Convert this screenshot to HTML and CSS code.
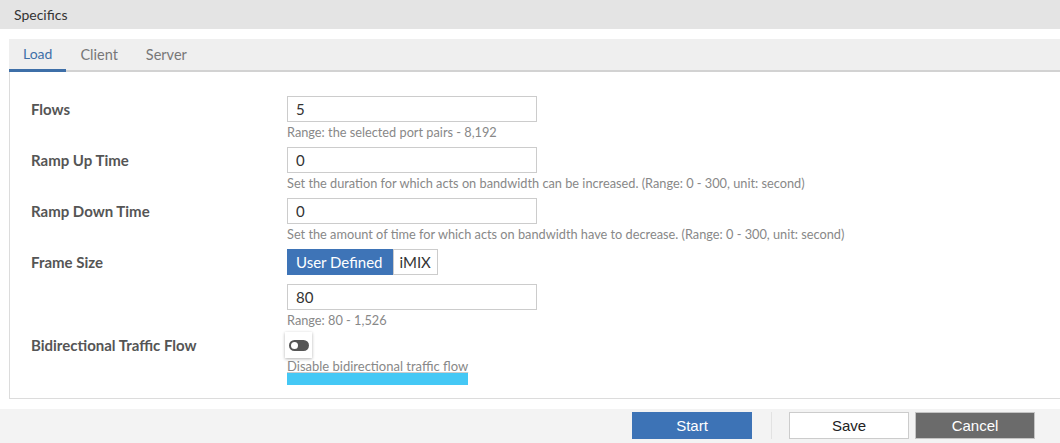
FILE: index.html
```html
<!DOCTYPE html>
<html lang="en">
<head>
    <meta charset="UTF-8">
    <meta name="viewport" content="width=device-width, initial-scale=1.0">
    <title>Specifics</title>
    <link rel="stylesheet" href="styles.css">
</head>
<body>
    <div class="section-title">Specifics</div>

    <div class="wrap">
        <div class="tabs">
            <div class="tab active">Load</div>
            <div class="tab">Client</div>
            <div class="tab">Server</div>
        </div>

        <div class="panel">
            <div class="row">
                <div class="label">Flows</div>
                <div class="field">
                    <input class="text-input" type="text" value="5">
                    <div class="help">Range: the selected port pairs - 8,192</div>
                </div>
            </div>
            <div class="row">
                <div class="label">Ramp Up Time</div>
                <div class="field">
                    <input class="text-input" type="text" value="0">
                    <div class="help">Set the duration for which acts on bandwidth can be increased. (Range: 0 - 300, unit: second)</div>
                </div>
            </div>
            <div class="row">
                <div class="label">Ramp Down Time</div>
                <div class="field">
                    <input class="text-input" type="text" value="0">
                    <div class="help">Set the amount of time for which acts on bandwidth have to decrease. (Range: 0 - 300, unit: second)</div>
                </div>
            </div>
            <div class="row">
                <div class="label">Frame Size</div>
                <div class="field">
                    <div class="segmented">
                        <button class="seg on">User Defined</button>
                        <button class="seg">iMIX</button>
                    </div>
                    <input class="text-input gap-top" type="text" value="80">
                    <div class="help">Range: 80 - 1,526</div>
                </div>
            </div>
            <div class="row toggle-row">
                <div class="label">Bidirectional Traffic Flow</div>
                <div class="field">
                    <div class="toggle-box"><span class="toggle"></span></div>
                    <span class="toggle-note">Disable bidirectional traffic flow</span>
                </div>
            </div>
        </div>
    </div>

    <div class="footer">
        <button class="btn btn-start">Start</button>
        <span class="sep"></span>
        <button class="btn btn-save">Save</button>
        <button class="btn btn-cancel">Cancel</button>
    </div>
</body>
</html>
```

FILE: styles.css
```css
body, html {
    margin: 0;
    padding: 0;
    font-family: Lato, "Open Sans", sans-serif;
    background-color: #ffffff;
    overflow: hidden;
}
.section-title {
    height: 29px;
    line-height: 29px;
    padding-left: 14px;
    background-color: #e4e4e4;
    color: #333;
    font-size: 14px;
}
.wrap {
    margin: 10px 0 0 9px;
}
.tabs {
    display: flex;
    height: 31px;
    background-color: #efefef;
    border-bottom: 2px solid #d2d2d2;
}
.tab {
    padding: 0 14px;
    line-height: 31px;
    font-size: 14.5px;
    color: #777;
}
.tab.active {
    color: #3e6fa8;
    border-bottom: 3px solid #3e6fa8;
    margin-bottom: -2px;
    line-height: 30px;
    font-size: 14px;
}
.panel {
    border-left: 1px solid #dcdcdc;
    border-bottom: 1px solid #dcdcdc;
    padding: 24px 0 13px 21px;
}
.row {
    display: flex;
    margin-bottom: 7px;
}
.label {
    width: 256px;
    flex-shrink: 0;
    line-height: 26px;
    font-size: 15px;
    font-weight: bold;
    color: #555;
}
.field {
    display: flex;
    flex-direction: column;
    align-items: flex-start;
}
.text-input {
    box-sizing: border-box;
    width: 250px;
    height: 26px;
    margin: 0;
    padding: 0 8px;
    border: 1px solid #cccccc;
    font-family: Lato, sans-serif;
    font-size: 15px;
    color: #333;
    outline: none;
}
.gap-top {
    margin-top: 9px;
}
.help {
    margin-top: 2px;
    line-height: 16px;
    font-size: 12.75px;
    color: #888;
    white-space: nowrap;
}
.segmented {
    display: flex;
    height: 26px;
}
.seg {
    margin: 0;
    padding: 0 6px;
    border: 1px solid #cccccc;
    background-color: #fff;
    font-family: Lato, sans-serif;
    font-size: 15px;
    color: #333;
    height: 26px;
    white-space: nowrap;
}
.seg.on {
    background-color: #3e74b7;
    border-color: #3e74b7;
    color: #fff;
    padding: 0 9px 0 8px;
}
.toggle-row {
    margin-top: -3px;
    margin-bottom: 0;
}
.toggle-box {
    box-sizing: border-box;
    width: 27px;
    height: 26px;
    margin-left: -2px;
    background-color: #fff;
    box-shadow: 0 1px 3px rgba(0, 0, 0, 0.3);
    display: flex;
    align-items: center;
    justify-content: center;
}
.toggle {
    position: relative;
    width: 20px;
    height: 11px;
    border-radius: 6px;
    background-color: #555;
}
.toggle::after {
    content: "";
    position: absolute;
    left: 2px;
    top: 2px;
    width: 7px;
    height: 7px;
    border-radius: 50%;
    background-color: #fff;
}
.toggle-note {
    display: inline-block;
    margin-top: 1px;
    font-size: 13px;
    line-height: 14px;
    color: #888;
    text-decoration: underline;
    text-decoration-color: #ccc;
    border-bottom: 12px solid #45c8f5;
}
.footer {
    margin-top: 10px;
    height: 34px;
    background-color: #f3f3f3;
    display: flex;
    align-items: flex-start;
    justify-content: flex-end;
    padding: 3px 25px 0 0;
    box-sizing: border-box;
}
.btn {
    box-sizing: border-box;
    width: 120px;
    height: 27px;
    margin: 0;
    font-family: "Liberation Sans", Arial, sans-serif;
    font-size: 15px;
    cursor: pointer;
}
.btn-start {
    background-color: #3d73b6;
    border: 1px solid #3d73b6;
    color: #fff;
}
.sep {
    width: 1px;
    height: 27px;
    margin: 0 17px 0 19px;
    background-color: #e2e2e2;
}
.btn-save {
    background-color: #fff;
    border: 1px solid #cccccc;
    color: #222;
    margin-right: 6px;
}
.btn-cancel {
    background-color: #6b6b6b;
    border: 1px solid #c4c4c4;
    color: #fff;
}
```
